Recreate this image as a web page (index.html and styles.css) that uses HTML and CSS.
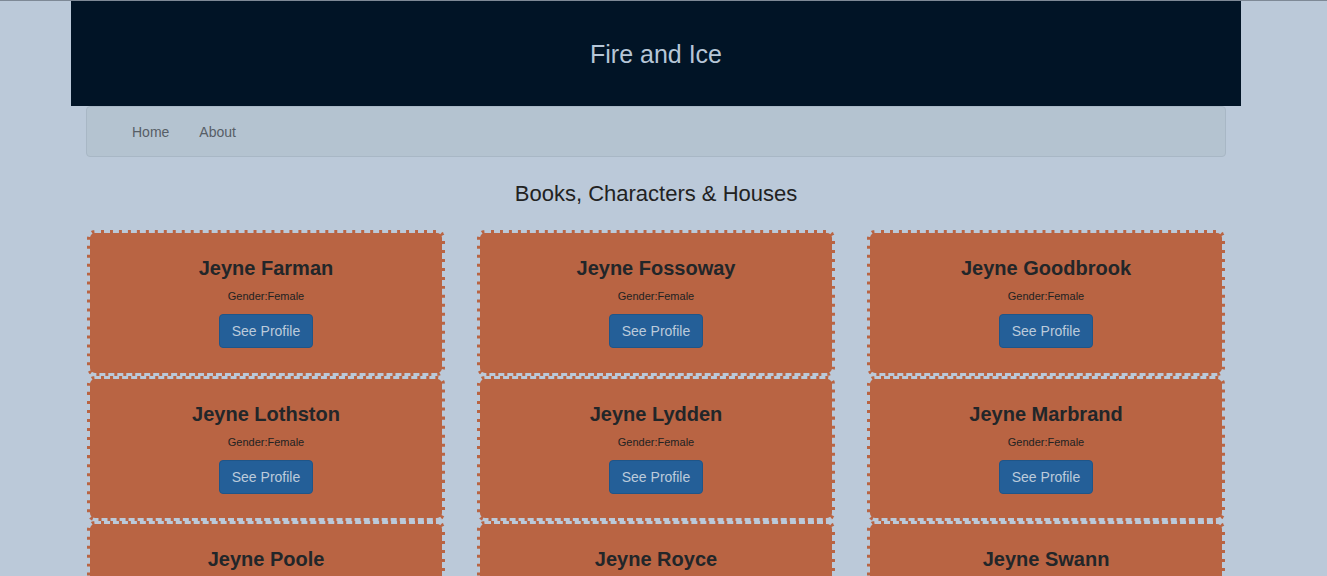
FILE: index.html
```html
<!DOCTYPE html>
<html lang="en">
<head>
<meta charset="utf-8">
<title>Fire and Ice</title>
<link rel="stylesheet" href="styles.css">
</head>
<body>
<header class="site-header">
  <h1 class="site-title">Fire and Ice</h1>
</header>
<nav class="navbar">
  <ul class="nav-links">
    <li><a href="#">Home</a></li>
    <li><a href="#">About</a></li>
  </ul>
</nav>
<main class="content">
  <h2 class="page-heading">Books, Characters &amp; Houses</h2>
  <div class="card-grid">
    <div class="card"><h3 class="card-name">Jeyne Farman</h3><p class="card-meta">Gender:Female</p><a class="btn" href="#">See Profile</a></div>
    <div class="card"><h3 class="card-name">Jeyne Fossoway</h3><p class="card-meta">Gender:Female</p><a class="btn" href="#">See Profile</a></div>
    <div class="card"><h3 class="card-name">Jeyne Goodbrook</h3><p class="card-meta">Gender:Female</p><a class="btn" href="#">See Profile</a></div>
    <div class="card"><h3 class="card-name">Jeyne Lothston</h3><p class="card-meta">Gender:Female</p><a class="btn" href="#">See Profile</a></div>
    <div class="card"><h3 class="card-name">Jeyne Lydden</h3><p class="card-meta">Gender:Female</p><a class="btn" href="#">See Profile</a></div>
    <div class="card"><h3 class="card-name">Jeyne Marbrand</h3><p class="card-meta">Gender:Female</p><a class="btn" href="#">See Profile</a></div>
    <div class="card"><h3 class="card-name">Jeyne Poole</h3><p class="card-meta">Gender:Female</p><a class="btn" href="#">See Profile</a></div>
    <div class="card"><h3 class="card-name">Jeyne Royce</h3><p class="card-meta">Gender:Female</p><a class="btn" href="#">See Profile</a></div>
    <div class="card"><h3 class="card-name">Jeyne Swann</h3><p class="card-meta">Gender:Female</p><a class="btn" href="#">See Profile</a></div>
  </div>
</main>
</body>
</html>
```
FILE: styles.css
```css
* { box-sizing: border-box; }

html, body {
  margin: 0;
  padding: 0;
}

body {
  background: #bbc9d9;
  border-top: 1px solid #7e8996;
  padding-right: 15px;
  font-family: "Liberation Sans", Arial, sans-serif;
  color: #222;
}

.site-header {
  width: 1170px;
  height: 105px;
  margin: 0 auto;
  background: #011426;
  display: flex;
  align-items: center;
  justify-content: center;
}

.site-title {
  margin: 0;
  font-size: 25px;
  font-weight: normal;
  line-height: 30px;
  color: #b6c6d7;
}

.navbar {
  width: 1140px;
  height: 51px;
  margin: 0 auto;
  background: #b4c3d0;
  border: 1px solid #a8b7c5;
  border-radius: 4px;
  display: flex;
  align-items: center;
  padding-left: 30px;
}

.nav-links {
  list-style: none;
  margin: 0;
  padding: 0;
  display: flex;
}

.nav-links a {
  display: block;
  padding: 0 15px;
  font-size: 14px;
  line-height: 20px;
  color: #575e66;
  text-decoration: none;
}

.content {
  width: 1140px;
  margin: 0 auto;
}

.page-heading {
  margin: 24px 0 23px;
  text-align: center;
  font-size: 22px;
  font-weight: normal;
  line-height: 26px;
  color: #222;
}

.card-grid {
  display: grid;
  grid-template-columns: repeat(3, 1fr);
  column-gap: 32px;
  padding: 0 1px;
}

.card {
  height: 145.5px;
  background: #b96443;
  border: 3px dashed #bbc9d9;
  border-radius: 8px;
  padding: 24px 0;
  display: flex;
  flex-direction: column;
  align-items: center;
}

.card-name {
  margin: 0;
  font-size: 20px;
  font-weight: bold;
  line-height: 22px;
  color: #222629;
}

.card-meta {
  margin: 11px 0 0;
  font-size: 11px;
  line-height: 13px;
  color: #222;
}

.btn {
  margin-top: 11px;
  display: block;
  height: 34px;
  padding: 6px 12px;
  font-size: 14px;
  line-height: 20px;
  color: #bccbdb;
  background: #245f98;
  border: 1px solid #1f5588;
  border-radius: 4px;
  text-decoration: none;
}
```
